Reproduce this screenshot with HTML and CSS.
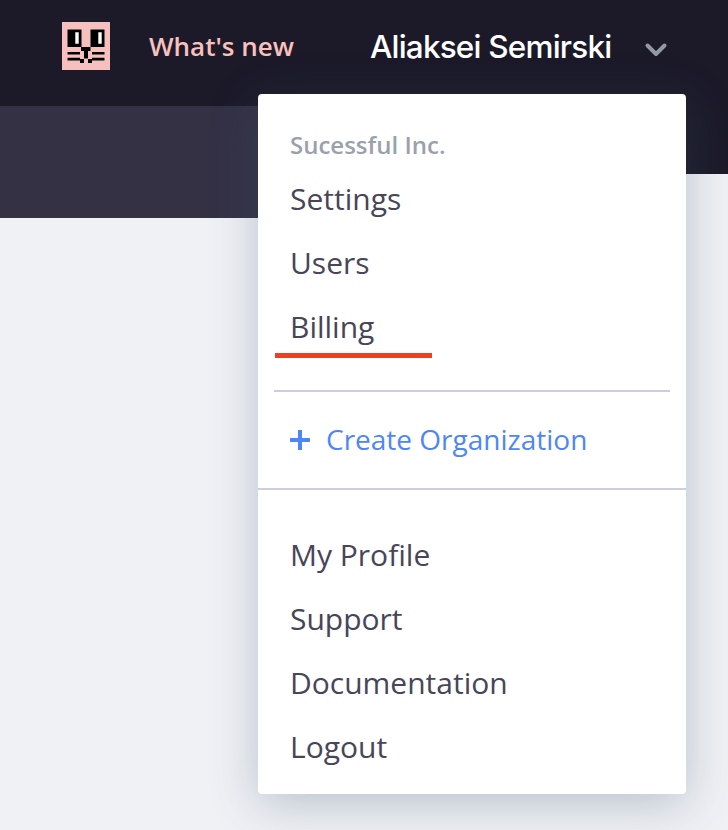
FILE: index.html
```html
<!DOCTYPE html>
<html lang="en">
<head>
<meta charset="utf-8">
<title>Account menu</title>
<link rel="stylesheet" href="styles.css">
</head>
<body>
<header class="topbar">
  <svg class="logo" viewBox="0 0 48 48" aria-hidden="true">
    <path class="logo-bg" d="M0 0h48v48H0z"/>
    <path d="M5.500 7.500h14v17.500h9V7.500h14V25h-14v4H26v7.500h-4V29h-3v-4H5.500zM18 37h4v4h-4zM26 37h4v4h-4zM5.500 30H18v2.500H5.500zM30 30h12.500v2.500H30zM5.500 35.700H18v2.700H5.500zM30 35.700h12.500v2.700H30z"/>
    <path class="logo-eye" d="M13.300 10.300h3.400v11.500h-3.400zM36.300 10.300h3.400v11.500h-3.400z"/>
  </svg>
  <a class="news">What's new</a>
  <span class="user">Aliaksei Semirski</span>
  <svg class="chevron" viewBox="0 0 24 16" aria-hidden="true"><path d="M3.500 3.500L12 12l8.500-8.500"/></svg>
</header>
<div class="subbar"><div class="subnav"></div><div class="side"></div></div>
<nav class="menu">
  <h2 class="org">Sucessful Inc.</h2>
  <a class="item settings">Settings</a>
  <a class="item users">Users</a>
  <a class="item billing">Billing</a>
  <a class="create"><svg class="plus" viewBox="0 0 20 20" aria-hidden="true"><path d="M8 0h4v8h8v4h-8v8H8v-8H0V8h8z"/></svg><span class="create-label">Create Organization</span></a>
  <div class="account">
    <a class="item profile">My Profile</a>
    <a class="item support">Support</a>
    <a class="item docs">Documentation</a>
    <a class="item logout">Logout</a>
  </div>
</nav>
</body>
</html>
```
FILE: styles.css
```css
* { box-sizing: border-box; }
body {
  margin: 0;
  height: 830px;
  position: relative;
  overflow: hidden;
  background: #f0f1f5;
  color: #484558;
  font-family: "Open Sans", sans-serif;
}
.topbar {
  display: flex;
  align-items: flex-start;
  height: 106px;
  padding: 22px 0 0 62px;
  background: #1c1a29;
  white-space: nowrap;
}
.logo { width: 48px; height: 48px; flex: none; }
.logo-bg { fill: #f6c0be; }
.logo-eye { fill: #fff; }
.news {
  width: 221px;
  margin-left: 39px;
  color: #f9c1be;
  font-size: 26px;
  font-weight: 600;
  line-height: 48px;
}
.user {
  width: 241px;
  color: #fff;
  font-family: Inter, sans-serif;
  font-size: 31.5px;
  font-weight: 500;
  line-height: 50px;
  letter-spacing: -.8px;
}
.chevron { width: 24px; height: 16px; margin: 20px 0 0 33px; fill: none; stroke: #9299a5; stroke-width: 4; stroke-linecap: round; stroke-linejoin: round; }
.subbar { display: flex; height: 112px; }
.subnav { width: 686px; background: #343145; }
.side { width: 42px; height: 68px; background: #1c1a29; }
.menu {
  position: absolute;
  top: 94px;
  left: 258px;
  width: 428px;
  height: 700px;
  padding-top: 31px;
  border-radius: 4px;
  background: #fff;
  box-shadow: 0 10px 48px rgba(58, 83, 110, .3);
}
.org { margin: 0 0 2px; padding-left: 32px; color: #9aa1ad; font-size: 24px; font-weight: 600; line-height: 40px; }
.item { display: block; height: 64px; padding-left: 32px; font-size: 30px; line-height: 64px; }
.billing { height: 69px; position: relative; }
.billing::before { content: ""; position: absolute; top: 58px; left: 17px; width: 157px; height: 5px; background: #ed3f24; }
.create {
  display: flex;
  align-items: center;
  height: 100px;
  margin-top: 26px;
  border-bottom: 2px solid #cacedd;
  color: #4f86f7;
  font-size: 28px;
  position: relative;
}
.create::before { content: ""; position: absolute; top: 0; left: 16px; right: 16px; height: 2px; background: #cacedd; }
.plus { width: 20px; height: 20px; margin: 2px 16px 0 32px; fill: currentColor; }
.account { padding-top: 33px; }
```
